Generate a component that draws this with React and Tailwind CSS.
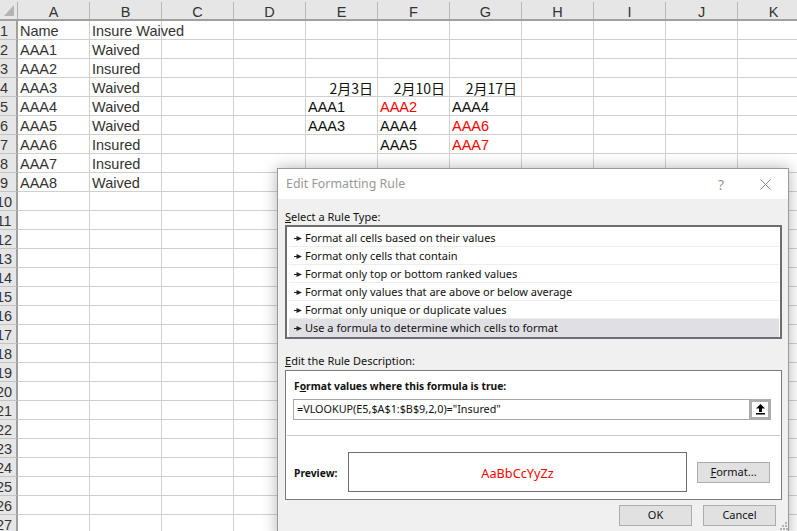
const COLS = ["A", "B", "C", "D", "E", "F", "G", "H", "I", "J", "K"];
const RED = "text-[#ff0000]";

const CELLS = {
  "A1": { t: "Name" }, "B1": { t: "Insure Waived" },
  "A2": { t: "AAA1" }, "B2": { t: "Waived" },
  "A3": { t: "AAA2" }, "B3": { t: "Insured" },
  "A4": { t: "AAA3" }, "B4": { t: "Waived" },
  "A5": { t: "AAA4" }, "B5": { t: "Waived" },
  "A6": { t: "AAA5" }, "B6": { t: "Waived" },
  "A7": { t: "AAA6" }, "B7": { t: "Insured" },
  "A8": { t: "AAA7" }, "B8": { t: "Insured" },
  "A9": { t: "AAA8" }, "B9": { t: "Waived" },
  "E4": { t: "2月3日", date: true }, "F4": { t: "2月10日", date: true }, "G4": { t: "2月17日", date: true },
  "E5": { t: "AAA1", dark: true }, "F5": { t: "AAA2", red: true }, "G5": { t: "AAA4", dark: true },
  "E6": { t: "AAA3", dark: true }, "F6": { t: "AAA4", dark: true }, "G6": { t: "AAA6", red: true },
  "F7": { t: "AAA5", dark: true }, "G7": { t: "AAA7", red: true },
};

const RULES = [
  "Format all cells based on their values",
  "Format only cells that contain",
  "Format only top or bottom ranked values",
  "Format only values that are above or below average",
  "Format only unique or duplicate values",
  "Use a formula to determine which cells to format",
];

function Cell({ id }) {
  const c = CELLS[id];
  let tone = "text-[#333333]";
  if (c?.dark) tone = "text-[#111111]";
  if (c?.red) tone = RED;
  return (
    <div className={`h-[19px] w-[72px] shrink-0 border-r border-b border-[#d0d0d0] flex items-center whitespace-nowrap leading-none pt-[2px] ${c?.date ? "justify-end pr-[4px] text-[#111111] font-['Noto_Sans_CJK_SC',sans-serif] text-[14px]" : `pl-[2px] ${tone}`}`}>
      {c?.t}
    </div>
  );
}

function Sheet() {
  const rows = Array.from({ length: 28 }, (_, i) => i + 1);
  return (
    <div className="font-['Liberation_Sans',sans-serif] text-[14.5px]">
      <div className="flex h-[21px] pt-[2px] bg-[#e6e6e6] border-b-2 border-[#a0a0a0]">
        <div className="w-[18px] shrink-0 border-r border-[#b0b0b0] flex items-end">
          <svg width="14" height="15" viewBox="0 0 14 15" className="mb-[2px]"><path d="M4 14 L14 14 L14 3 Z" fill="#b4b4b4" /></svg>
        </div>
        {COLS.map((c) => (
          <div key={c} className="w-[72px] shrink-0 border-r border-[#b8b8b8] flex items-center justify-center pt-[3px] text-[#333333] leading-none">{c}</div>
        ))}
      </div>
      {rows.map((r) => (
        <div key={r} className="flex">
          <div className="w-[18px] h-[19px] shrink-0 bg-[#e6e6e6] border-r-2 border-b border-r-[#a0a0a0] border-b-[#c4c4c4] overflow-hidden flex items-center pt-[2px] text-[#333333] leading-none">
            <span className="w-[26px] shrink-0 -ml-[9px] text-center">{r}</span>
          </div>
          {COLS.map((c) => <Cell key={c} id={`${c}${r}`} />)}
        </div>
      ))}
    </div>
  );
}

function Arrow() {
  return (
    <svg width="8" height="5" viewBox="0 0 8 5" className="shrink-0">
      <rect x="0" y="2" width="4" height="1" fill="#222222" />
      <path d="M2.5 0 L8 2.5 L2.5 5 Z" fill="#222222" />
    </svg>
  );
}

function Btn({ children, className = "" }) {
  return (
    <div className={`h-[21px] w-[73px] border border-[#adadad] bg-[#e1e1e1] flex items-center justify-center text-[#111111] ${className}`}>{children}</div>
  );
}

function Dialog() {
  return (
    <div className="absolute left-[277px] top-[168px] w-[512px] h-[372px] border border-[#9a9a9a] bg-[#f0f0f0] shadow-[0_0_14px_rgba(0,0,0,0.3)] flex flex-col font-['Noto_Sans',sans-serif] text-[11px] text-[#111111]">
      <div className="h-[30px] shrink-0 bg-white flex items-center pl-[8px] pr-[17px] text-[12.4px] text-[#999999]">
        <span className="flex-1">Edit Formatting Rule</span>
        <span className="w-[12px] text-center text-[14px] mr-[33px]">?</span>
        <svg width="11" height="11" viewBox="0 0 11 11"><path d="M0.5 0.5 L10.5 10.5 M10.5 0.5 L0.5 10.5" stroke="#8a8a8a" strokeWidth="1" /></svg>
      </div>
      <div className="flex-1 pl-[7px] pr-[6px] flex flex-col">
        <div className="h-[26px] flex items-end leading-none pb-[3px]"><span><u>S</u>elect a Rule Type:</span></div>
        <div className="h-[114px] border-2 border-[#6e6e72] bg-white pl-[2px] pr-[1px] py-[2px] flex flex-col">
          {RULES.map((r, i) => (
            <div key={r} className={`h-[18px] shrink-0 flex items-center gap-[3px] pl-[5px] pt-[1px] border-b ${i === 5 ? "bg-[#e0e0e4] border-[#e0e0e4]" : "border-[#eeeeee]"}`}>
              <Arrow /><span>{r}</span>
            </div>
          ))}
        </div>
        <div className="h-[31px] flex items-end leading-none pb-[4px]"><span><u>E</u>dit the Rule Description:</span></div>
        <div className="h-[130px] border border-[#7c7c7c] bg-white flex flex-col">
          <div className="h-[28px] shrink-0 pl-[8px] flex items-center pt-[3px] font-bold text-[10.3px]"><span>F<u>o</u>rmat values where this formula is true:</span></div>
          <div className="h-[21px] shrink-0 ml-[7px] mr-[10px] border border-[#a8a8a8] flex items-center pl-[3px] text-[10.8px]">
            <span className="flex-1">=VLOOKUP(E5,$A$1:$B$9,2,0)="Insured"</span>
            <div className="h-[21px] w-[22px] -mr-[1px] border-[3px] border-[#adadad] bg-white flex items-center justify-center">
              <svg width="9" height="11" viewBox="0 0 9 11"><path d="M4.5 0 L9 4.5 L6 4.5 L6 8 L3 8 L3 4.5 L0 4.5 Z" fill="#000000" /><rect x="0" y="9" width="9" height="1.5" fill="#000000" /></svg>
            </div>
          </div>
          <div className="h-[1px] mt-[15px] mx-[1px] bg-[#c8c8c8] shrink-0" />
          <div className="flex-1 flex items-start pl-[8px] pt-[16px]">
            <span className="w-[54px] mt-[14px] font-bold text-[10.3px]">Preview:</span>
            <div className="w-[339px] h-[40px] pt-[4px] border border-[#6e6e6e] flex items-center justify-center text-[#ff0000] text-[12.7px]">AaBbCcYyZz</div>
            <Btn className="ml-[10px] mt-[10px]"><span><u>F</u>ormat...</span></Btn>
          </div>
        </div>
        <div className="flex justify-end gap-[11px] mt-[5px] pr-[6px]">
          <Btn>OK</Btn>
          <Btn>Cancel</Btn>
        </div>
      </div>
      <svg width="8" height="8" viewBox="0 0 8 8" className="absolute left-[502px] top-[353px]">
        <g fill="#b4b4b4">
          <rect x="5" y="0" width="2" height="2" />
          <rect x="2" y="3" width="2" height="2" />
          <rect x="5" y="3" width="2" height="2" />
          <rect x="0" y="6" width="2" height="2" />
          <rect x="3" y="6" width="2" height="2" />
          <rect x="6" y="6" width="2" height="2" />
        </g>
      </svg>
    </div>
  );
}

export default function App() {
  return (
    <div className="relative w-[797px] h-[531px] overflow-hidden bg-white">
      <Sheet />
      <Dialog />
    </div>
  );
}
